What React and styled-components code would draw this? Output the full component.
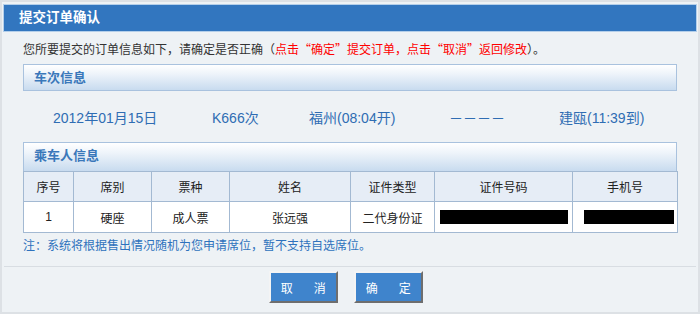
import React from 'react';
import styled, { createGlobalStyle } from 'styled-components';

const GlobalStyle = createGlobalStyle`
  html, body {
    margin: 0;
    padding: 0;
    background: #eef2f5;
  }
  * {
    box-sizing: border-box;
  }
`;

const cjk = '"Noto Sans CJK SC", "Liberation Sans", sans-serif';

const Panel = styled.div`
  width: 700px;
  height: 314px;
  border: 2px solid #dde1e5;
  padding: 2px 1px 0;
  background: #eef2f5;
  font-family: "Liberation Sans", "Noto Sans CJK SC", sans-serif;
  font-size: 12px;
  color: #333;
`;

const Header = styled.div`
  height: 28px;
  border: 1px solid #b4cfea;
  background: #3276bf;
  color: #fff;
  font-size: 13.5px;
  font-weight: bold;
  line-height: 26px;
  padding-left: 15px;
`;

const Body = styled.div`
  padding: 0 20px;
`;

const Intro = styled.p`
  margin: 7px 0 0;
  height: 20px;
  line-height: 20px;
  white-space: nowrap;
  font-family: ${cjk};
`;

const Red = styled.span`
  color: #ff0000;
`;

const SectionBar = styled.div`
  height: ${(p) => (p.$flush ? '29px' : '27px')};
  margin-top: ${(p) => p.$top}px;
  border: 1px solid #a9c2de;
  border-bottom: ${(p) => (p.$flush ? 'none' : '1px solid #a9c2de')};
  background: linear-gradient(to bottom, #ffffff 0%, #eef4fa 35%, #c8dbef 100%);
  color: #3a78ba;
  font-size: 13px;
  font-weight: bold;
  line-height: 26px;
  padding-left: 10px;
`;

const TrainRow = styled.div`
  height: 51px;
  display: grid;
  grid-template-columns: 159px 97px 140px 110px 1fr;
  align-items: center;
  padding-left: 30px;
  color: #2f6db3;
  font-size: 14px;
  white-space: nowrap;
`;

const Table = styled.table`
  width: 100%;
  border-collapse: collapse;
  table-layout: fixed;
  font-size: 12px;
  color: #222;
`;

const Th = styled.th`
  height: 30px;
  border: 1px solid #a3b9d2;
  background: #e6edf6;
  font-weight: normal;
  text-align: center;
`;

const Td = styled.td`
  height: 31px;
  border: 1px solid #a3b9d2;
  background: #fff;
  text-align: center;
  padding: 0;
`;

const Redacted = styled.div`
  height: 14px;
  width: ${(p) => p.$w}px;
  margin-left: ${(p) => p.$left}px;
  background: #000;
`;

const Note = styled.p`
  margin: 2px 0 0;
  height: 20px;
  line-height: 20px;
  color: #2f72bd;
  font-family: ${cjk};
`;

const Footer = styled.div`
  margin: 11px 1px 0;
  border-top: 1px solid #d8dde2;
  padding: 4px 8px 0 0;
  display: flex;
  justify-content: center;
  gap: 16px;
`;

const Button = styled.button`
  width: 69px;
  height: 32px;
  border: 2px solid;
  border-color: #f4f4f4 #6e6e6e #6e6e6e #f4f4f4;
  background: #3f84cc;
  color: #fff;
  font-family: ${cjk};
  font-size: 12px;
  letter-spacing: 4.5px;
  padding: 0 0 0 4px;
  cursor: pointer;
`;

const columns = [
  { title: '序号', width: 50 },
  { title: '席别', width: 78 },
  { title: '票种', width: 78 },
  { title: '姓名', width: 121 },
  { title: '证件类型', width: 84 },
  { title: '证件号码', width: 138 },
  { title: '手机号', width: 105 },
];

export default function App() {
  return (
    <>
      <GlobalStyle />
      <Panel>
        <Header>提交订单确认</Header>
        <Body>
          <Intro>
            您所要提交的订单信息如下，请确定是否正确（
            <Red>点击“确定”提交订单，点击“取消”返回修改</Red>）。
          </Intro>

          <SectionBar $top={5}>车次信息</SectionBar>
          <TrainRow>
            <span>2012年01月15日</span>
            <span>K666次</span>
            <span>福州(08:04开)</span>
            <span>－－－－</span>
            <span>建瓯(11:39到)</span>
          </TrainRow>

          <SectionBar $top={0} $flush>乘车人信息</SectionBar>
          <Table>
            <colgroup>
              {columns.map((c) => (
                <col key={c.title} style={{ width: c.width }} />
              ))}
            </colgroup>
            <thead>
              <tr>
                {columns.map((c) => (
                  <Th key={c.title}>{c.title}</Th>
                ))}
              </tr>
            </thead>
            <tbody>
              <tr>
                <Td>1</Td>
                <Td>硬座</Td>
                <Td>成人票</Td>
                <Td>张远强</Td>
                <Td>二代身份证</Td>
                <Td><Redacted $w={128} $left={5} /></Td>
                <Td><Redacted $w={90} $left={11} /></Td>
              </tr>
            </tbody>
          </Table>
          <Note>注：系统将根据售出情况随机为您申请席位，暂不支持自选席位。</Note>
        </Body>
        <Footer>
          <Button>取　消</Button>
          <Button>确　定</Button>
        </Footer>
      </Panel>
    </>
  );
}
